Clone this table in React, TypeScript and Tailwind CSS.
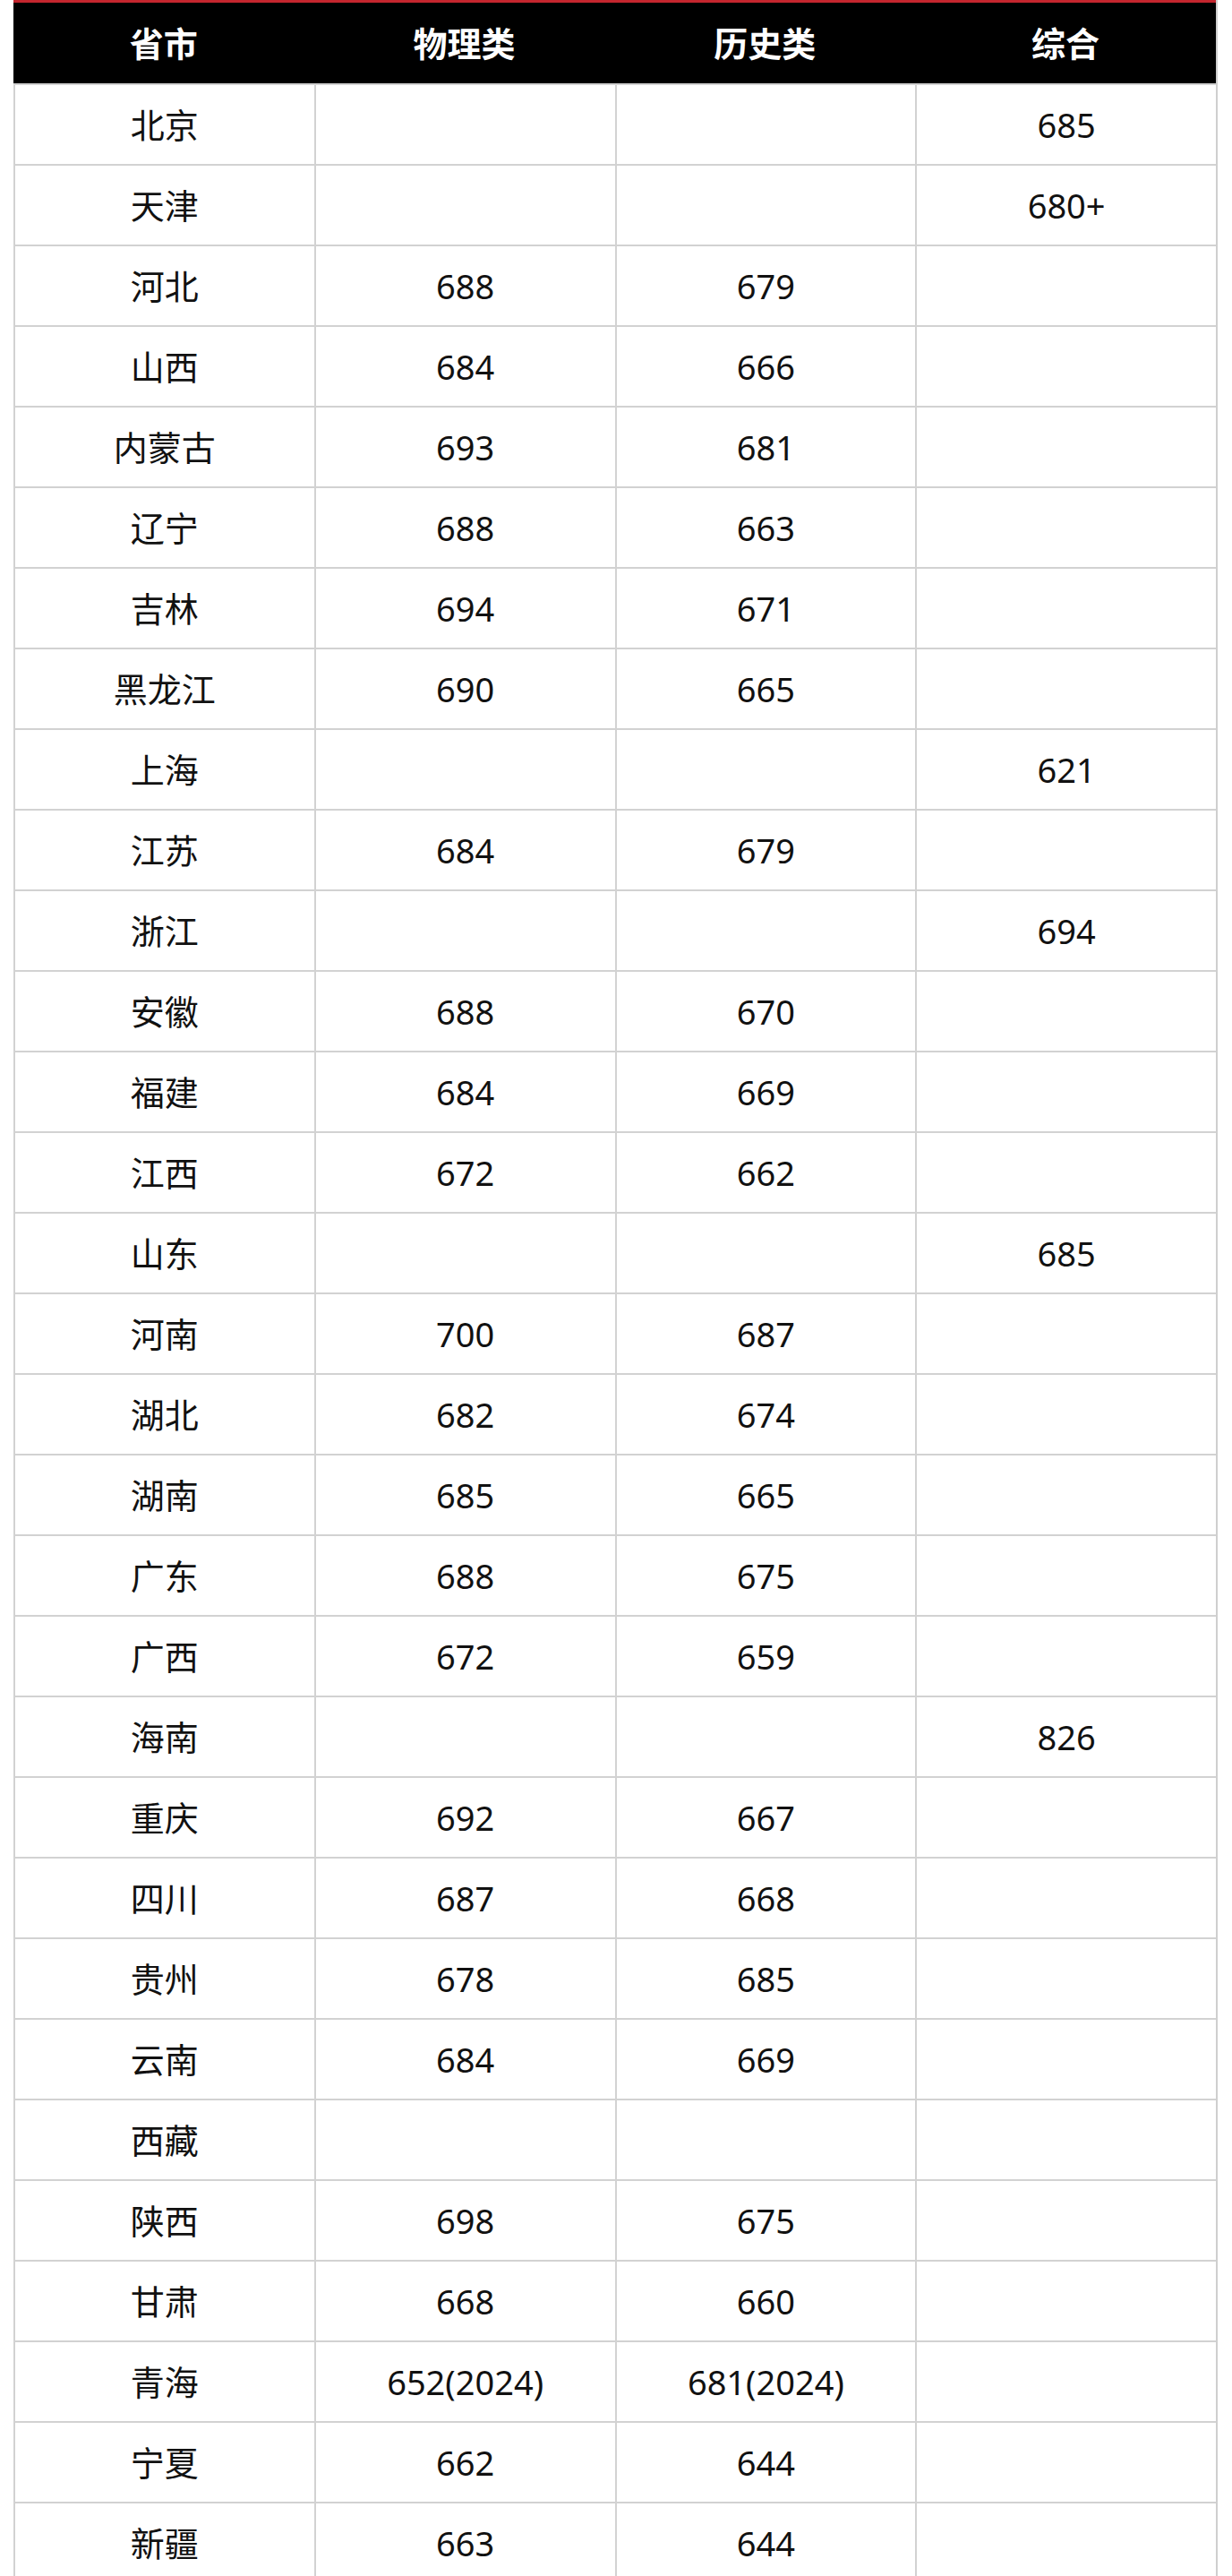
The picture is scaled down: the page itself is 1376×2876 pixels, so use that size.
const ROWS: [string, string, string, string][] = [
  ['北京', '', '', '685'],
  ['天津', '', '', '680+'],
  ['河北', '688', '679', ''],
  ['山西', '684', '666', ''],
  ['内蒙古', '693', '681', ''],
  ['辽宁', '688', '663', ''],
  ['吉林', '694', '671', ''],
  ['黑龙江', '690', '665', ''],
  ['上海', '', '', '621'],
  ['江苏', '684', '679', ''],
  ['浙江', '', '', '694'],
  ['安徽', '688', '670', ''],
  ['福建', '684', '669', ''],
  ['江西', '672', '662', ''],
  ['山东', '', '', '685'],
  ['河南', '700', '687', ''],
  ['湖北', '682', '674', ''],
  ['湖南', '685', '665', ''],
  ['广东', '688', '675', ''],
  ['广西', '672', '659', ''],
  ['海南', '', '', '826'],
  ['重庆', '692', '667', ''],
  ['四川', '687', '668', ''],
  ['贵州', '678', '685', ''],
  ['云南', '684', '669', ''],
  ['西藏', '', '', ''],
  ['陕西', '698', '675', ''],
  ['甘肃', '668', '660', ''],
  ['青海', '652(2024)', '681(2024)', ''],
  ['宁夏', '662', '644', ''],
  ['新疆', '663', '644', ''],
];

const HEADERS = ['省市', '物理类', '历史类', '综合'];

const FONT = "font-['Noto_Sans','Noto_Sans_CJK_SC',sans-serif]";

export default function App() {
  return (
    <div className={`w-[1376px] h-[2876px] overflow-hidden bg-white pl-[15px] ${FONT}`}>
      <div className="w-[1345px] border-r-2 border-[#cfcfcf]">
        {/* header */}
        <div className="grid grid-cols-4 h-[93px] bg-black border-t-[3px] border-[#c4262e]">
          {HEADERS.map((h) => (
            <div
              key={h}
              className="flex items-center justify-center text-[38px] font-bold text-white"
            >
              {h}
            </div>
          ))}
        </div>

        {/* body */}
        {ROWS.map((row) => (
          <div key={row[0]} className="grid grid-cols-4 h-[90px] border-t-2 border-[#d2d2d2]">
            {row.map((cell, i) => (
              <div
                key={i}
                className="flex items-center justify-center border-l-2 border-[#d2d2d2] text-[38px] text-[#111]"
              >
                {cell}
              </div>
            ))}
          </div>
        ))}
      </div>
    </div>
  );
}
